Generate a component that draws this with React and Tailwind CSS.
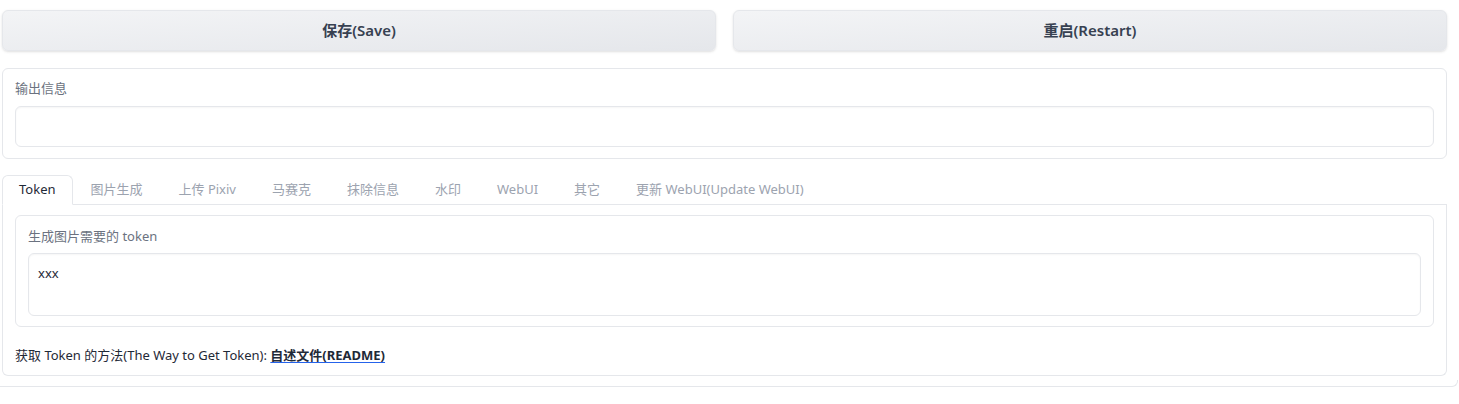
import React, { useState } from "react";

const tabs = [
  "Token",
  "图片生成",
  "上传 Pixiv",
  "马赛克",
  "抹除信息",
  "水印",
  "WebUI",
  "其它",
  "更新 WebUI(Update WebUI)",
];

const font = { fontFamily: '"Noto Sans", "Noto Sans CJK SC", sans-serif' };

const App = () => {
  const [active, setActive] = useState(0);
  const [token, setToken] = useState("xxx");

  return (
    <div className="bg-white w-[1459px] h-[404px] overflow-hidden" style={font}>
      <div className="pl-[2px] pr-[12px] pt-[10px]">
        {/* Buttons */}
        <div className="flex gap-[17px]">
          <button className="flex-1 h-[41px] rounded-md border border-[#e5e7eb] bg-gradient-to-br from-[#f3f4f6] to-[#e5e7eb] text-[#374151] text-[15px] font-semibold shadow-sm">
            保存(Save)
          </button>
          <button className="flex-1 h-[41px] rounded-md border border-[#e5e7eb] bg-gradient-to-br from-[#f3f4f6] to-[#e5e7eb] text-[#374151] text-[15px] font-semibold shadow-sm">
            重启(Restart)
          </button>
        </div>

        {/* Output info */}
        <div className="mt-[17px] h-[91px] rounded-md border border-[#e5e7eb] px-[12px] pt-[10px]">
          <div className="text-[13px] leading-[18px] text-[#6b7280]">输出信息</div>
          <div className="mt-[9px] h-[41px] rounded-md border border-[#e5e7eb] shadow-[inset_0_1px_2px_rgba(0,0,0,0.04)]"></div>
        </div>

        {/* Tabs */}
        <div className="mt-[16px]">
          <div className="flex items-end border-b border-[#e5e7eb] h-[30px]">
            {tabs.map((t, i) => (
              <button
                key={t}
                onClick={() => setActive(i)}
                className={
                  i === active
                    ? "h-[30px] px-4 mb-[-1px] text-[13px] text-[#1f2937] bg-white border border-b-white border-[#e5e7eb] rounded-t-md"
                    : "h-[30px] px-[17px] mb-[-1px] text-[13px] text-[#9ca3af] border border-transparent"
                }
              >
                {t}
              </button>
            ))}
          </div>
          <div className="h-[171px] border border-t-0 border-[#e5e7eb] rounded-b-md px-[12px] pt-[10px]">
            <div className="h-[112px] rounded-md border border-[#e5e7eb] px-[12px] pt-[10px]">
              <div className="text-[13px] leading-[20px] text-[#6b7280]">生成图片需要的 token</div>
              <textarea
                value={token}
                onChange={(e) => setToken(e.target.value)}
                className="mt-[7px] w-full h-[63px] resize-none rounded-md border border-[#e5e7eb] px-[9px] pt-[10px] text-[13px] leading-[18px] text-[#1f2937] outline-none shadow-[inset_0_1px_2px_rgba(0,0,0,0.04)]"
              />
            </div>
            <div className="mt-[18px] text-[13px] leading-[20px] text-[#1f2937]">
              获取 Token 的方法(The Way to Get Token):{" "}
              <a href="#" className="font-bold underline decoration-[#2563eb] underline-offset-2">
                自述文件(README)
              </a>
            </div>
          </div>
        </div>
      </div>
      <div className="mt-[4px] mr-[1px] h-[7px] border-b border-r border-[#e5e7eb] rounded-br-md"></div>
    </div>
  );
};

export default App;
